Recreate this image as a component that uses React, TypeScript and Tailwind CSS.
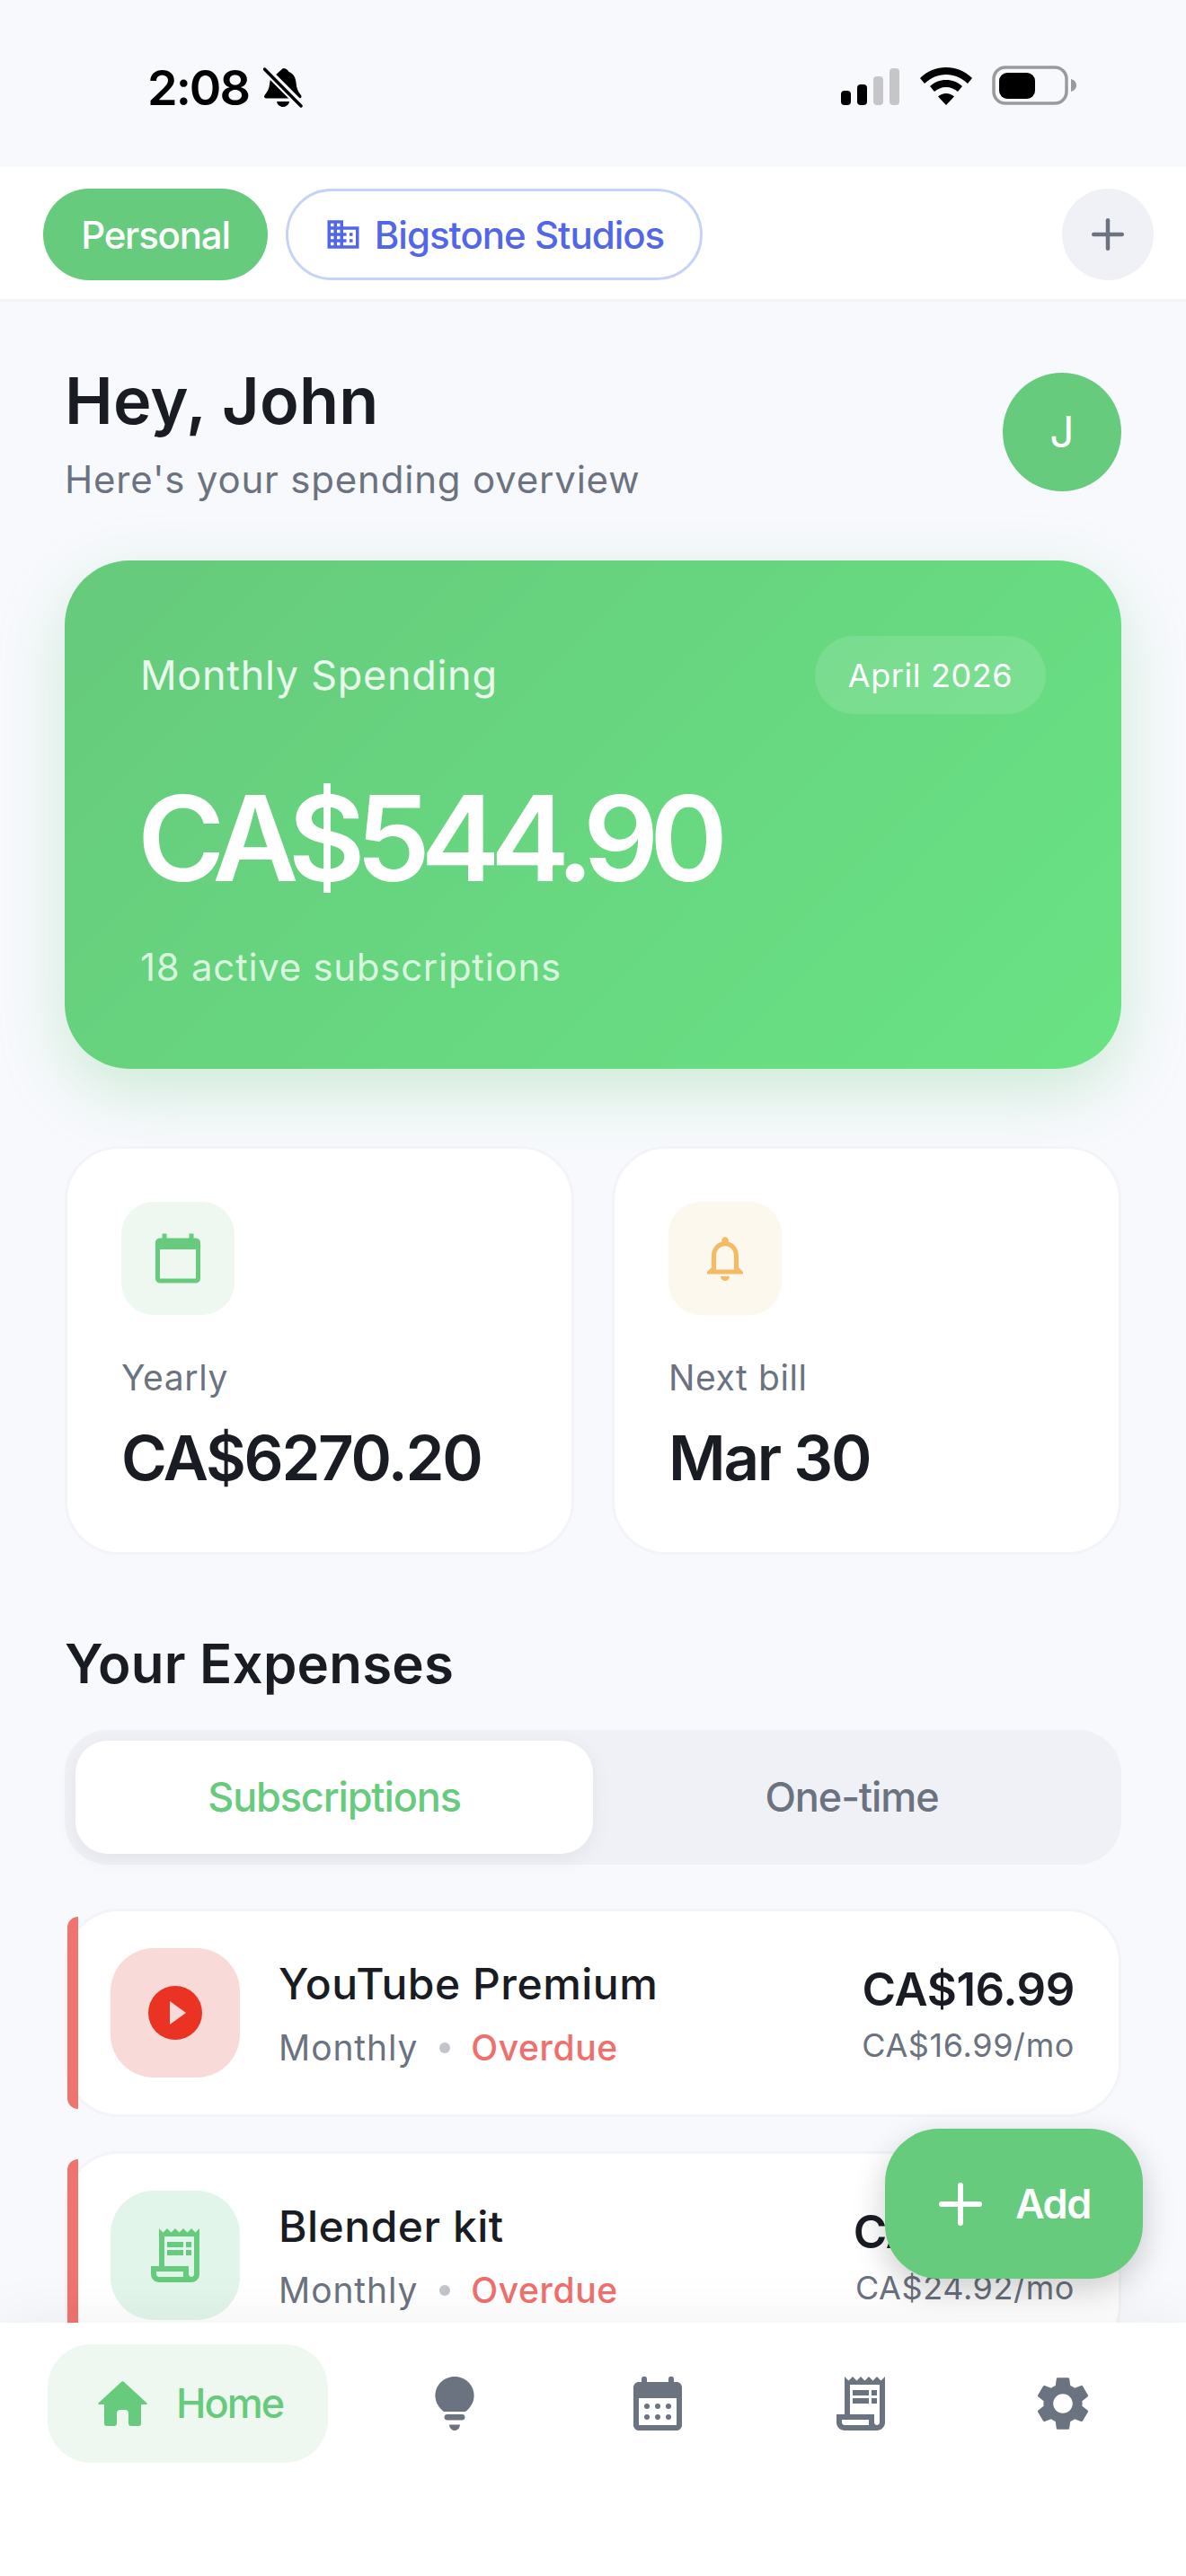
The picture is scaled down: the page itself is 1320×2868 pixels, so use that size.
import React from "react";
import { Plus } from "lucide-react";
import { MdOutlineBusiness, MdOutlineReceiptLong, MdSettings, MdCalendarToday, MdNotificationsNone } from "react-icons/md";

function BellOff() {
  return (
    <svg width="44" height="46" viewBox="0 0 44 46" className="ml-[16px]">
      <path d="M22 1c3 0 5 1.500 6.500 4 5 2 7.500 6 8 12 .5 6 2 10 5.500 14 1 1.500.500 3-1.500 3.500H3c-2-.5-2.500-2-1.500-3.500 3-3.500 5-7 5.500-12 .3-2.500.5-4 1-5.500z" fill="#000" />
      <path d="M15 38h14c-.5 3.500-3.500 6-7 6s-6.500-2.500-7-6z" fill="#000" />
      <path d="M1 1l42 42" stroke="#f8f9fd" strokeWidth="9" />
      <path d="M1.500 2L42 43" stroke="#000" strokeWidth="3.500" strokeLinecap="round" />
    </svg>
  );
}

function Signal() {
  return (
    <svg width="70" height="41" viewBox="0 0 70 41">
      <rect x="0" y="25" width="11" height="16" rx="4" fill="#000" />
      <rect x="18" y="18" width="11" height="23" rx="4" fill="#000" />
      <rect x="36" y="9" width="11" height="32" rx="4" fill="#c6c6c9" />
      <rect x="54" y="0" width="11" height="41" rx="4" fill="#c6c6c9" />
    </svg>
  );
}

function Wifi() {
  return (
    <svg width="58" height="42" viewBox="0 0 58 42">
      <path d="M29 0c11 0 21 4 29 12l-5 6C46 11.500 38 8 29 8S12 11.500 5 18l-5-6C8 4 18 0 29 0z" fill="#000" />
      <path d="M29 14c7 0 13 2.500 18 7l-5 6c-3.500-3-8-5-13-5s-9.500 2-13 5l-5-6c5-4.500 11-7 18-7z" fill="#000" />
      <path d="M29 29c3.500 0 6.500 1.200 9 3.500L29 42l-9-9.500c2.500-2.300 5.500-3.500 9-3.500z" fill="#000" />
    </svg>
  );
}

function Battery() {
  return (
    <svg width="94" height="44" viewBox="0 0 94 44">
      <rect x="2" y="2" width="81" height="40" rx="13" fill="none" stroke="#9a9a9d" strokeWidth="3.500" />
      <rect x="8" y="8" width="40" height="29" rx="9" fill="#000" />
      <path d="M88 15c3.500 1 6 3.500 6 7s-2.500 6-6 7z" fill="#9a9a9d" />
    </svg>
  );
}

function HomeIcon() {
  return (
    <svg width="55" height="50" viewBox="0 0 55 50" fill="#66cb7c">
      <path d="M26 1a2.200 2.200 0 0 1 3 0L54 24a1 1 0 0 1-1 2H48V47a3 3 0 0 1-3 3H37a3 3 0 0 1-3-3V36a4 4 0 0 0-4-4H25a4 4 0 0 0-4 4V47a3 3 0 0 1-3 3H10a3 3 0 0 1-3-3V26H2a1 1 0 0 1-1-2z" />
    </svg>
  );
}

function BulbIcon() {
  return (
    <svg width="72" height="72" viewBox="0 0 24 24" fill="#6b7280">
      <path d="M12 2C8.100 2 4.800 5.100 4.800 9c0 2.700 1.500 4.700 3.200 6h8c1.700-1.300 3.200-3.300 3.200-6 0-3.900-3.300-7-7.200-7z" />
      <rect x="8.200" y="16" width="7.600" height="2.200" rx="1.100" />
      <path d="M10 19.800h4c-.1 1.300-1 2.200-2 2.200s-1.900-.9-2-2.200z" />
    </svg>
  );
}

function CalendarIcon() {
  return (
    <svg width="72" height="72" viewBox="0 0 24 24" fill="#6b7280">
      <path fillRule="evenodd" d="M6 3V2.900a1 1 0 0 1 2 0V4h8V2.900a1 1 0 0 1 2 0V4h1c1.100 0 2 .9 2 2v14c0 1.100-.9 2-2 2H5c-1.100 0-2-.9-2-2V6c0-1.100.9-2 2-2h1zM5 10v10h14V10z" />
      <circle cx="8" cy="13" r="1" /><circle cx="12" cy="13" r="1" /><circle cx="16" cy="13" r="1" />
      <circle cx="8" cy="17" r="1" /><circle cx="12" cy="17" r="1" /><circle cx="16" cy="17" r="1" />
    </svg>
  );
}

function ExpenseRow({ tint, icon, name, price, perMonth }: { tint: string; icon: React.ReactNode; name: string; price: string; perMonth: string }) {
  return (
    <div className="relative shrink-0 flex items-center h-[232px] bg-white rounded-[60px] border-[3px] border-[#f3f4f8] pl-[48px] pr-[49px]">
      <div className="absolute left-0 top-[6px] bottom-[6px] w-[12px] rounded-l-[12px] bg-[#f07370]" />
      <div className={`w-[144px] h-[144px] rounded-[48px] flex items-center justify-center shrink-0 ${tint}`}>{icon}</div>
      <div className="ml-[43px] flex-1 min-w-0 pt-[3px]">
        <div className="text-[48px] leading-[66px] font-medium text-[#1a1c24] tracking-[0.5px]">{name}</div>
        <div className="mt-[8px] flex items-center text-[39px] leading-[60px] text-[#6b7280] tracking-[0.9px]">
          <span>Monthly</span>
          <span className="w-[12px] h-[12px] rounded-full bg-[#c2c5cc] ml-[24px] mr-[23px]" />
          <span className="text-[#ef6f6c] font-medium tracking-[0.6px]">Overdue</span>
        </div>
      </div>
      <div className="text-right shrink-0 pt-[7px]">
        <div className="text-[51px] leading-[64px] font-[570] text-[#1a1c24] tracking-[-0.4px]">{price}</div>
        <div className="text-[36px] leading-[60px] text-[#6b7280] tracking-[0.6px]">{perMonth}</div>
      </div>
    </div>
  );
}

export default function App() {
  return (
    <div className="relative w-[1320px] h-[2868px] overflow-hidden bg-[#f8f9fd] flex flex-col font-['Inter',sans-serif]">
      <div className="h-[186px] shrink-0 flex items-center justify-between pl-[164px] pr-[122px] pt-[10px]">
        <div className="flex items-center">
          <span className="text-[54px] leading-[54px] font-semibold text-black tracking-[-2px]">2:08</span>
          <BellOff />
        </div>
        <div className="flex items-end gap-[18px] mb-[6px]">
          <Signal />
          <div className="flex items-end gap-[22px]">
            <Wifi />
            <Battery />
          </div>
        </div>
      </div>

      <div className="h-[150px] shrink-0 bg-white border-b-[3px] border-[#f3f4f8] flex items-start pl-[48px] pr-[36px] pt-[24px]">
        <div className="h-[102px] w-[250px] rounded-full bg-[#66cb7c] flex items-center justify-center text-white text-[42px] font-medium tracking-[-1.200px]">Personal</div>
        <div className="ml-[20px] h-[102px] w-[464px] rounded-full border-[3px] border-[#c7d2f8] flex items-center justify-center text-[#5266e8] text-[42px] font-medium tracking-[-1px]">
          <MdOutlineBusiness size={42} />
          <span className="ml-[14px]">Bigstone Studios</span>
        </div>
        <div className="ml-auto w-[102px] h-[102px] rounded-full bg-[#f0f1f6] flex items-center justify-center text-[#6b7280]">
          <Plus size={54} strokeWidth={2} />
        </div>
      </div>

      <div className="flex-1 min-h-0 overflow-hidden flex flex-col px-[72px]">
        <div className="mt-[65px] flex items-start justify-between shrink-0">
          <div>
            <div className="text-[72px] leading-[90px] font-[570] text-[#1a1c24] tracking-[0.2px]">Hey, John</div>
            <div className="mt-[16px] text-[42px] leading-[54px] text-[#6b7280] tracking-[0.8px]">Here's your spending overview</div>
          </div>
          <div className="mt-[14px] w-[132px] h-[132px] rounded-full bg-[#66cb7c] flex items-center justify-center text-white text-[48px]">J</div>
        </div>

        <div className="mt-[63px] h-[566px] shrink-0 rounded-[72px] bg-[linear-gradient(135deg,#66ca7c,#69e384)] shadow-[0_24px_72px_rgba(102,203,124,0.3)] p-[84px] flex flex-col">
          <div className="flex items-center justify-between h-[87px]">
            <span className="text-[45px] text-white/85 tracking-[0.7px]">Monthly Spending</span>
            <span className="h-[87px] w-[257px] rounded-full bg-white/12 flex items-center justify-center text-[36px] text-white tracking-[0.6px]">April 2026</span>
          </div>
          <div className="mt-[63px] -ml-[3px] text-[132px] leading-[150px] font-[570] text-white tracking-[-10.500px]">CA$544.90</div>
          <div className="mt-[42px] text-[42px] leading-[54px] text-white/75 tracking-[0.7px]">18 active subscriptions</div>
        </div>

        <div className="mt-[86px] grid grid-cols-2 gap-[42px] shrink-0">
          <div className="h-[455px] rounded-[60px] bg-white border-[3px] border-[#f3f4f8] pl-[60px] pt-[59px]">
            <div className="w-[126px] h-[126px] rounded-[36px] bg-[#eef8f1] flex items-center justify-center">
              <MdCalendarToday size={60} color="#66cb7c" />
            </div>
            <div className="mt-[46px] text-[39px] leading-[48px] text-[#6b7280] tracking-[0.6px]">Yearly</div>
            <div className="mt-[23px] text-[69px] leading-[84px] font-[570] text-[#1a1c24] tracking-[-2.300px]">CA$6270.20</div>
          </div>
          <div className="h-[455px] rounded-[60px] bg-white border-[3px] border-[#f3f4f8] pl-[60px] pt-[59px]">
            <div className="w-[126px] h-[126px] rounded-[36px] bg-[#fdf8ed] flex items-center justify-center">
              <MdNotificationsNone size={60} color="#f6bb62" />
            </div>
            <div className="mt-[46px] text-[39px] leading-[48px] text-[#6b7280] tracking-[0.6px]">Next bill</div>
            <div className="mt-[23px] text-[69px] leading-[84px] font-[570] text-[#1a1c24] tracking-[-2.200px]">Mar 30</div>
          </div>
        </div>

        <div className="mt-[82px] text-[60px] leading-[78px] font-[570] text-[#1a1c24] tracking-[0.2px] shrink-0">Your Expenses</div>

        <div className="mt-[35px] h-[150px] shrink-0 rounded-[48px] bg-[#f0f1f6] p-[12px] flex">
          <div className="w-[576px] rounded-[36px] bg-white shadow-[0_6px_24px_rgba(0,0,0,0.06)] flex items-center justify-center text-[45px] font-medium text-[#66cb7c] tracking-[-1.150px]">Subscriptions</div>
          <div className="flex-1 flex items-center justify-center text-[45px] font-medium text-[#6b7280] tracking-[-1.100px]">One-time</div>
        </div>

        <div className="mt-[49px] flex flex-col gap-[38px]">
          <ExpenseRow
            tint="bg-[#f8dad8]"
            icon={
              <svg width="60" height="60" viewBox="0 0 60 60">
                <circle cx="30" cy="30" r="30" fill="#ea3323" />
                <path d="M24 17 42 30 24 43z" fill="#f8dad8" />
              </svg>
            }
            name="YouTube Premium"
            price="CA$16.99"
            perMonth="CA$16.99/mo"
          />
          <ExpenseRow
            tint="bg-[#e2f5ea]"
            icon={<MdOutlineReceiptLong size={72} color="#66cb7c" />}
            name="Blender kit"
            price="CA$24.92"
            perMonth="CA$24.92/mo"
          />
        </div>
      </div>

      <div className="relative z-10 h-[282px] shrink-0 bg-white shadow-[0_-6px_60px_rgba(0,0,0,0.05)] flex items-start pt-[24px] pl-[53px]">
        <div className="w-[312px] h-[132px] rounded-[48px] bg-[#eef8f1] flex items-center pl-[56px]">
          <HomeIcon />
          <span className="ml-[32px] text-[45px] font-medium text-[#66cb7c] tracking-[-2px]">Home</span>
        </div>
        <div className="ml-[105px] h-[132px] flex items-center"><BulbIcon /></div>
        <div className="ml-[154px] h-[132px] flex items-center"><CalendarIcon /></div>
        <div className="ml-[154px] h-[132px] flex items-center"><MdOutlineReceiptLong size={72} color="#6b7280" /></div>
        <div className="ml-[153px] h-[132px] flex items-center"><MdSettings size={72} color="#6b7280" /></div>
      </div>

      <div className="absolute z-20 left-[985px] top-[2370px] w-[287px] h-[167px] rounded-[60px] bg-[#66cb7c] shadow-[0_12px_36px_rgba(0,0,0,0.2)] flex items-center pl-[48px] text-white">
        <Plus size={72} strokeWidth={2} />
        <span className="ml-[25px] text-[45px] font-semibold tracking-[-1.500px]">Add</span>
      </div>
    </div>
  );
}
